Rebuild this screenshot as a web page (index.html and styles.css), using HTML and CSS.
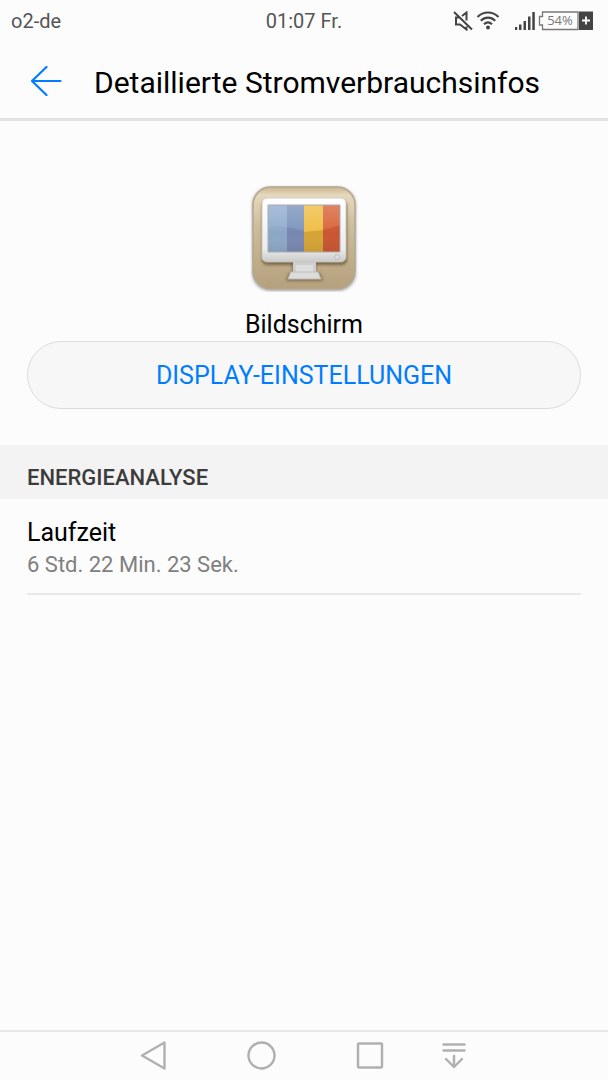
FILE: index.html
```
<!DOCTYPE html>
<html lang="de">
<head>
    <meta charset="UTF-8">
    <meta name="viewport" content="width=device-width, initial-scale=1.0">
    <title>Detaillierte Stromverbrauchsinfos</title>
    <link rel="stylesheet" href="styles.css">
</head>
<body>
    <div class="status-bar">
        <span>o2-de</span>
        <span>01:07 Fr.</span>
        <div class="status-icons">
            <!-- Stumm -->
            <svg width="20" height="20" viewBox="0 0 20 20" fill="none" stroke="#444" stroke-width="2">
                <path d="M6.500 6.500H3v7h4l6.500 5v-3M9 5l4.500-3.500V9.500M1 1l18 17.500"/>
            </svg>
            <!-- WLAN -->
            <svg class="wifi" width="24" height="20" viewBox="0 0 24 20" fill="none" stroke="#444" stroke-width="2.200">
                <path d="M1.500 6C7.500 0 16.500 0 22.500 6M4.800 9.800c4.200-4.200 10.200-4.200 14.400 0M8 13.300c2.500-2.300 5.500-2.300 8 0"/>
                <circle cx="12" cy="16.500" r="2" fill="#444" stroke="none"/>
            </svg>
            <!-- Mobilfunk -->
            <svg width="20" height="20" viewBox="0 0 20 20" fill="#444">
                <path d="M0 16h2.200v3H0zM4 13.500h2.500V19H4zM8.500 10H11v9H8.500zM13 5.500h2.500V19H13zM17.300 1h2.500v18h-2.500z"/>
            </svg>
            <!-- Akku -->
            <svg class="battery" width="56" height="20" viewBox="0 0 56 20">
                <path d="M4.500 1H40v17.500H4.500V14H1.500V5.500h3z" fill="none" stroke="#777" stroke-width="1.300"/>
                <text x="22" y="14" text-anchor="middle">54%</text>
                <path d="M41 .5h14v18.500H41z" fill="#444"/>
                <path d="M48 5.500v8M44 9.500h8" stroke="#fff" stroke-width="1.800"/>
            </svg>
        </div>
    </div>

    <header>
        <button type="button" class="btn-back" aria-label="Zurück">
            <svg width="32" height="32" viewBox="0 0 32 32" fill="none" stroke="#007dff" stroke-width="2.200" stroke-linecap="round" stroke-linejoin="round">
                <path d="M30.500 17H2M16.500 3L2 17l14.500 14"/>
            </svg>
        </button>
        <h1>Detaillierte Stromverbrauchsinfos</h1>
    </header>

    <main>
        <section class="app">
            <svg width="108" height="108" viewBox="0 0 108 108">
                <defs>
                    <linearGradient id="bg" x1="0" y1="0" x2="0" y2="1">
                        <stop offset="0" stop-color="#c9b590"/>
                        <stop offset=".08" stop-color="#e6d8bb"/>
                        <stop offset=".4" stop-color="#cdbc9c"/>
                        <stop offset="1" stop-color="#b5a07c"/>
                    </linearGradient>
                    <linearGradient id="frame" x1="0" y1="0" x2="0" y2="1">
                        <stop offset="0" stop-color="#fff"/>
                        <stop offset=".8" stop-color="#ebebeb"/>
                        <stop offset="1" stop-color="#c9c9c9"/>
                    </linearGradient>
                    <linearGradient id="shade" x1="0" y1="0" x2="0" y2="1">
                        <stop offset="0" stop-color="#fff" stop-opacity=".18"/>
                        <stop offset=".6" stop-color="#fff" stop-opacity="0"/>
                        <stop offset="1" stop-color="#000" stop-opacity=".06"/>
                    </linearGradient>
                    <filter id="soft" x="-20%" y="-20%" width="140%" height="140%">
                        <feGaussianBlur stdDeviation="1.500"/>
                    </filter>
                </defs>
                <rect x="2" y="3" width="104" height="104" rx="18" fill="#777" opacity=".6" filter="url(#soft)"/>
                <rect x="3" y="3" width="102" height="102" rx="18" fill="url(#bg)" stroke="#b3a88f" stroke-width="1.500"/>
                <rect x="12" y="17" width="85" height="64" rx="5" fill="#5d4c2c" opacity=".7" filter="url(#soft)"/>
                <path d="M42 78h24v11h4l3 8H36l3-8h3z" fill="#5d4c2c" opacity=".6" filter="url(#soft)"/>
                <path d="M43 76h23v13H43z" fill="#cfcfcf"/>
                <path d="M46 81h17v8H46z" fill="#dedede"/>
                <path d="M41 88h27l3 7H38z" fill="#dcdcdc" stroke="#bdbdbd"/>
                <rect x="12" y="14" width="84" height="64" rx="5" fill="url(#frame)" stroke="#c6c6c6" stroke-width=".8"/>
                <path d="M18 21h19v47H18z" fill="#94aed0"/>
                <path d="M37 21h17v47H37z" fill="#7f96be"/>
                <path d="M54 21h19v47H54z" fill="#efbf48"/>
                <path d="M73 21h17v47H73z" fill="#d9683f"/>
                <path d="M18 44c7-2 13-2 19 0v24H18z" fill="#839fbc" opacity=".5"/>
                <path d="M37 43l17 4v21H37z" fill="#7478a2" opacity=".5"/>
                <path d="M54 48l19-2v22H54z" fill="#c9982f" opacity=".7"/>
                <path d="M73 46l17-5v27H73z" fill="#be4b29" opacity=".6"/>
                <path d="M18 21h72v47H18z" fill="url(#shade)" stroke="#ababab"/>
                <circle cx="87" cy="73" r="2.500" fill="#ddd" stroke="#bbb"/>
            </svg>
            <h2>Bildschirm</h2>
            <button type="button" class="btn-settings">DISPLAY-EINSTELLUNGEN</button>
        </section>

        <section class="analysis">
            <h3>ENERGIEANALYSE</h3>
            <dl>
                <dt>Laufzeit</dt>
                <dd>6 Std. 22 Min. 23 Sek.</dd>
            </dl>
        </section>
    </main>

    <nav>
        <div class="nav-main">
            <button type="button" aria-label="Zurück">
                <svg width="30" height="30" viewBox="0 0 30 30">
                    <path d="M25.500 1.500v26L3 14.500z"/>
                </svg>
            </button>
            <button type="button" aria-label="Startbildschirm">
                <svg width="30" height="30" viewBox="0 0 30 30">
                    <circle cx="14.500" cy="14.500" r="13"/>
                </svg>
            </button>
            <button type="button" aria-label="Letzte Apps">
                <svg width="30" height="30" viewBox="0 0 30 30">
                    <rect x="3" y="2.500" width="24" height="24" rx="1"/>
                </svg>
            </button>
        </div>
        <button type="button" aria-label="Benachrichtigungen">
            <svg width="30" height="30" viewBox="0 0 30 30">
                <path d="M4.500 3.500h21M4.500 9.500h21M15 15v11M7 18l8 8 8-8"/>
            </svg>
        </button>
    </nav>
</body>
</html>
```
FILE: styles.css
```
* {
    box-sizing: border-box;
}

body {
    display: flex;
    flex-direction: column;
    min-height: 100vh;
    margin: 0;
    font-family: Roboto, sans-serif;
    background-color: #fcfcfc;
    color: #000;
}

h1, h2, h3, dl, dd {
    margin: 0;
    font-weight: normal;
}

button {
    padding: 0;
    border: none;
    background: none;
    font-family: inherit;
    cursor: pointer;
}

svg {
    display: block;
}

/* Statusleiste */
.status-bar {
    display: grid;
    grid-template-columns: 1fr auto 1fr;
    align-items: center;
    height: 42px;
    padding: 0 11px;
    font-size: 20px;
    color: #555;
}

.status-icons {
    display: flex;
    justify-content: flex-end;
    margin-right: 3px;
}

.wifi {
    margin: 0 15px 0 3px;
}

.battery {
    margin-left: 3px;
}

.battery text {
    font-family: "Open Sans", sans-serif;
    font-size: 13px;
    fill: #777;
}

/* Kopfzeile */
header {
    display: flex;
    align-items: center;
    gap: 32px;
    height: 79px;
    padding: 0 30px;
    border-bottom: 3px solid #e2e2e2;
}

h1 {
    padding-top: 4px;
    font-size: 30px;
}

/* App */
.app {
    display: flex;
    flex-direction: column;
    align-items: center;
    padding: 63px 27px 36px;
}

h2 {
    margin-top: 17px;
    font-size: 25px;
    line-height: 32px;
}

.btn-settings {
    width: 100%;
    height: 68px;
    border: 1px solid #dcdcdc;
    border-radius: 34px;
    background-color: #f7f7f7;
    font-size: 25px;
    color: #007dff;
}

/* Energieanalyse */
h3 {
    padding: 18px 27px 6px;
    background-color: #f3f3f3;
    font-size: 22px;
    font-weight: 500;
    line-height: 30px;
    color: #3c3c3c;
}

dl {
    margin: 0 27px;
    padding: 18px 0 12px;
    border-bottom: 2px solid #e8e8e8;
}

dt {
    font-size: 25px;
    line-height: 32px;
}

dd {
    font-size: 22px;
    line-height: 32px;
    color: #7f7f7f;
}

/* Navigationsleiste */
nav {
    display: flex;
    justify-content: center;
    gap: 36px;
    height: 50px;
    margin-top: auto;
    border-top: 2px solid #e8e8e8;
}

.nav-main {
    display: flex;
    gap: 60px;
}

nav button {
    display: flex;
    justify-content: center;
    align-items: center;
    width: 48px;
    height: 48px;
}

nav svg {
    fill: none;
    stroke: #b0b0b0;
    stroke-width: 2.4;
    stroke-linecap: round;
    stroke-linejoin: round;
}
```
